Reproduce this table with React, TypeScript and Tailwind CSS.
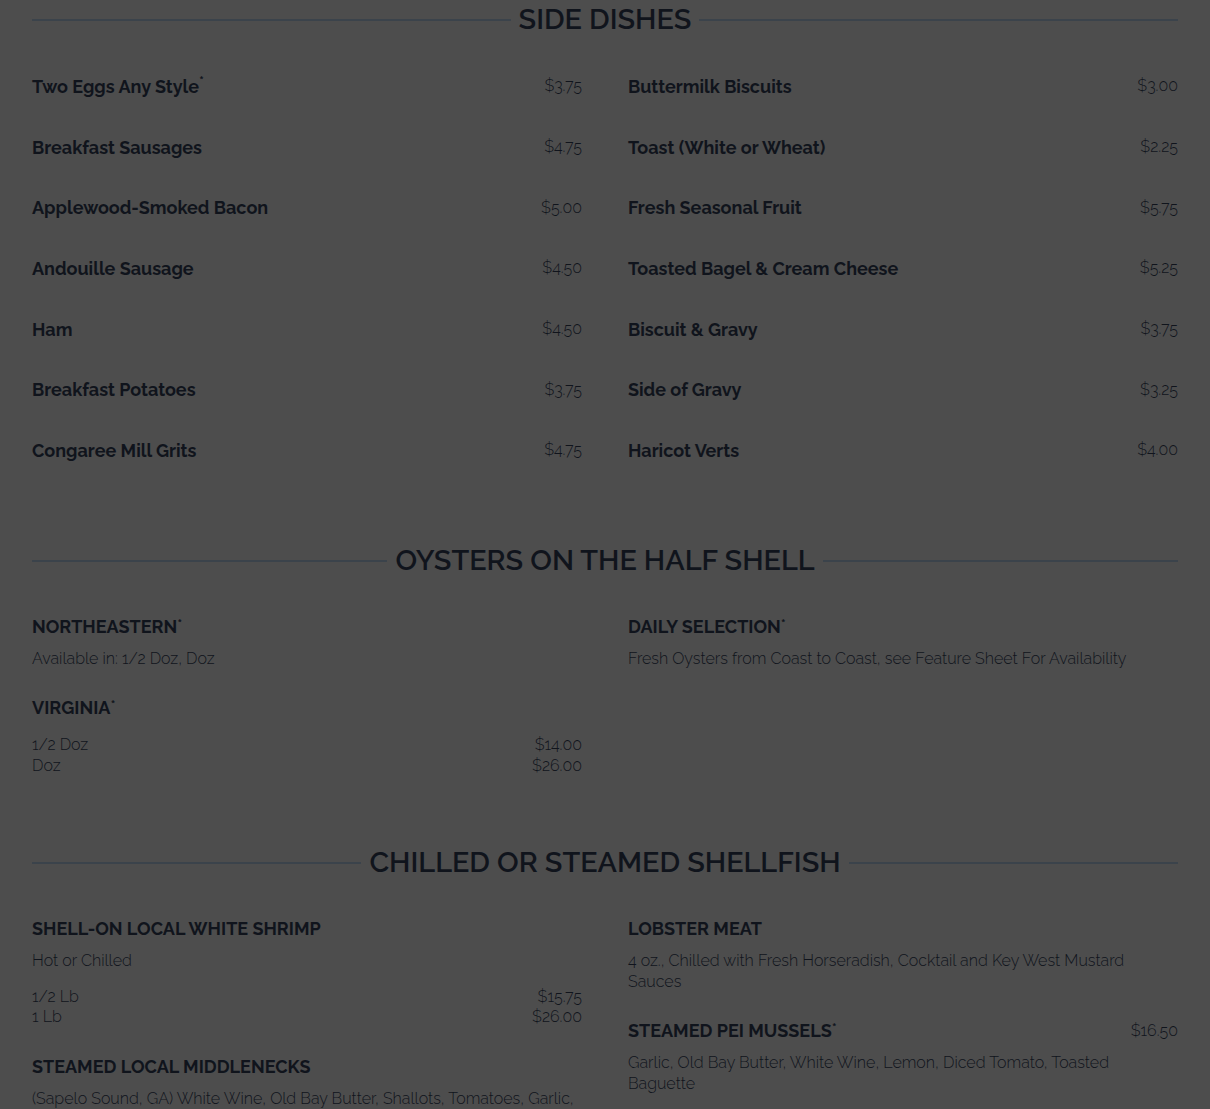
import React from "react"

const font = { fontFamily: "Raleway, Lato, 'Noto Sans', sans-serif" }

const sides: [string, string][] = [
  ["Two Eggs Any Style*", "$3.75"],
  ["Buttermilk Biscuits", "$3.00"],
  ["Breakfast Sausages", "$4.75"],
  ["Toast (White or Wheat)", "$2.25"],
  ["Applewood-Smoked Bacon", "$5.00"],
  ["Fresh Seasonal Fruit", "$5.75"],
  ["Andouille Sausage", "$4.50"],
  ["Toasted Bagel & Cream Cheese", "$5.25"],
  ["Ham", "$4.50"],
  ["Biscuit & Gravy", "$3.75"],
  ["Breakfast Potatoes", "$3.75"],
  ["Side of Gravy", "$3.25"],
  ["Congaree Mill Grits", "$4.75"],
  ["Haricot Verts", "$4.00"],
]

interface Item {
  name: string
  star?: boolean
  price?: string
  desc?: string
  sizes?: [string, string][]
}

function Star() {
  return <span className="text-[15px] font-semibold align-top relative top-[-2px]">*</span>
}

function SectionTitle({ title }: { title: string }) {
  return (
    <div className="flex items-center h-[38px]">
      <div className="flex-1 h-[2px] mt-[2px] bg-[#3b434b]" />
      <h2 className="px-2 text-[28.8px] leading-[40px] font-semibold text-[#10141c]">{title}</h2>
      <div className="flex-1 h-[2px] mt-[2px] bg-[#3b434b]" />
    </div>
  )
}

function MenuItem({ item }: { item: Item }) {
  return (
    <div className="mb-[27px]">
      <div className="flex justify-between items-center">
        <h3 className="text-[18px] leading-[24px] font-bold uppercase text-[#10141c]">
          {item.name}
          {item.star && <Star />}
        </h3>
        {item.price && <span className="text-[16px] font-light text-[#10141c]">{item.price}</span>}
      </div>
      {item.desc && (
        <p className="mt-[10px] text-[16px] leading-[20.5px] font-light text-[#10141c]">{item.desc}</p>
      )}
      {item.sizes && (
        <div className="mt-[15px]">
          {item.sizes.map(([s, p]) => (
            <div key={s} className="flex justify-between text-[16px] leading-[20.5px] font-light text-[#10141c]">
              <span>{s}</span>
              <span>{p}</span>
            </div>
          ))}
        </div>
      )}
    </div>
  )
}

const oystersLeft: Item[] = [
  { name: "Northeastern", star: true, desc: "Available in: 1/2 Doz, Doz" },
  { name: "Virginia", star: true, sizes: [["1/2 Doz", "$14.00"], ["Doz", "$26.00"]] },
]
const oystersRight: Item[] = [
  { name: "Daily Selection", star: true, desc: "Fresh Oysters from Coast to Coast, see Feature Sheet For Availability" },
]
const shellLeft: Item[] = [
  { name: "Shell-On Local White Shrimp", desc: "Hot or Chilled", sizes: [["1/2 Lb", "$15.75"], ["1 Lb", "$26.00"]] },
  { name: "Steamed Local Middlenecks", desc: "(Sapelo Sound, GA) White Wine, Old Bay Butter, Shallots, Tomatoes, Garlic, Toasted Baguette" },
]
const shellRight: Item[] = [
  { name: "Lobster Meat", desc: "4 oz., Chilled with Fresh Horseradish, Cocktail and Key West Mustard Sauces" },
  { name: "Steamed PEI Mussels", star: true, price: "$16.50", desc: "Garlic, Old Bay Butter, White Wine, Lemon, Diced Tomato, Toasted Baguette" },
]

export default function App() {
  return (
    <div className="min-h-screen bg-[#4d4d4d] overflow-hidden" style={font}>
      <div className="px-[32px] w-[1210px]">
        {/* Side dishes */}
        <section>
          <SectionTitle title="SIDE DISHES" />
          <div className="grid grid-cols-2 gap-x-[46px] mt-[18px]">
            {sides.map(([name, price]) => (
              <div key={name} className="flex justify-between items-center h-[60.7px]">
                <span className="text-[18px] font-bold text-[#10141c]">
                  {name.endsWith("*") ? (
                    <>
                      {name.slice(0, -1)}
                      <Star />
                    </>
                  ) : (
                    name
                  )}
                </span>
                <span className="text-[16px] font-light text-[#10141c]">{price}</span>
              </div>
            ))}
          </div>
        </section>

        {/* Oysters */}
        <section className="mt-[60px]">
          <SectionTitle title="OYSTERS ON THE HALF SHELL" />
          <div className="grid grid-cols-2 gap-x-[46px] mt-[36px]">
            <div>
              {oystersLeft.map((it) => <MenuItem key={it.name} item={it} />)}
            </div>
            <div>
              {oystersRight.map((it) => <MenuItem key={it.name} item={it} />)}
            </div>
          </div>
        </section>

        {/* Shellfish */}
        <section className="mt-[40px]">
          <SectionTitle title="CHILLED OR STEAMED SHELLFISH" />
          <div className="grid grid-cols-2 gap-x-[46px] mt-[36px]">
            <div>
              {shellLeft.map((it) => <MenuItem key={it.name} item={it} />)}
            </div>
            <div>
              {shellRight.map((it) => <MenuItem key={it.name} item={it} />)}
            </div>
          </div>
        </section>
      </div>
    </div>
  )
}
